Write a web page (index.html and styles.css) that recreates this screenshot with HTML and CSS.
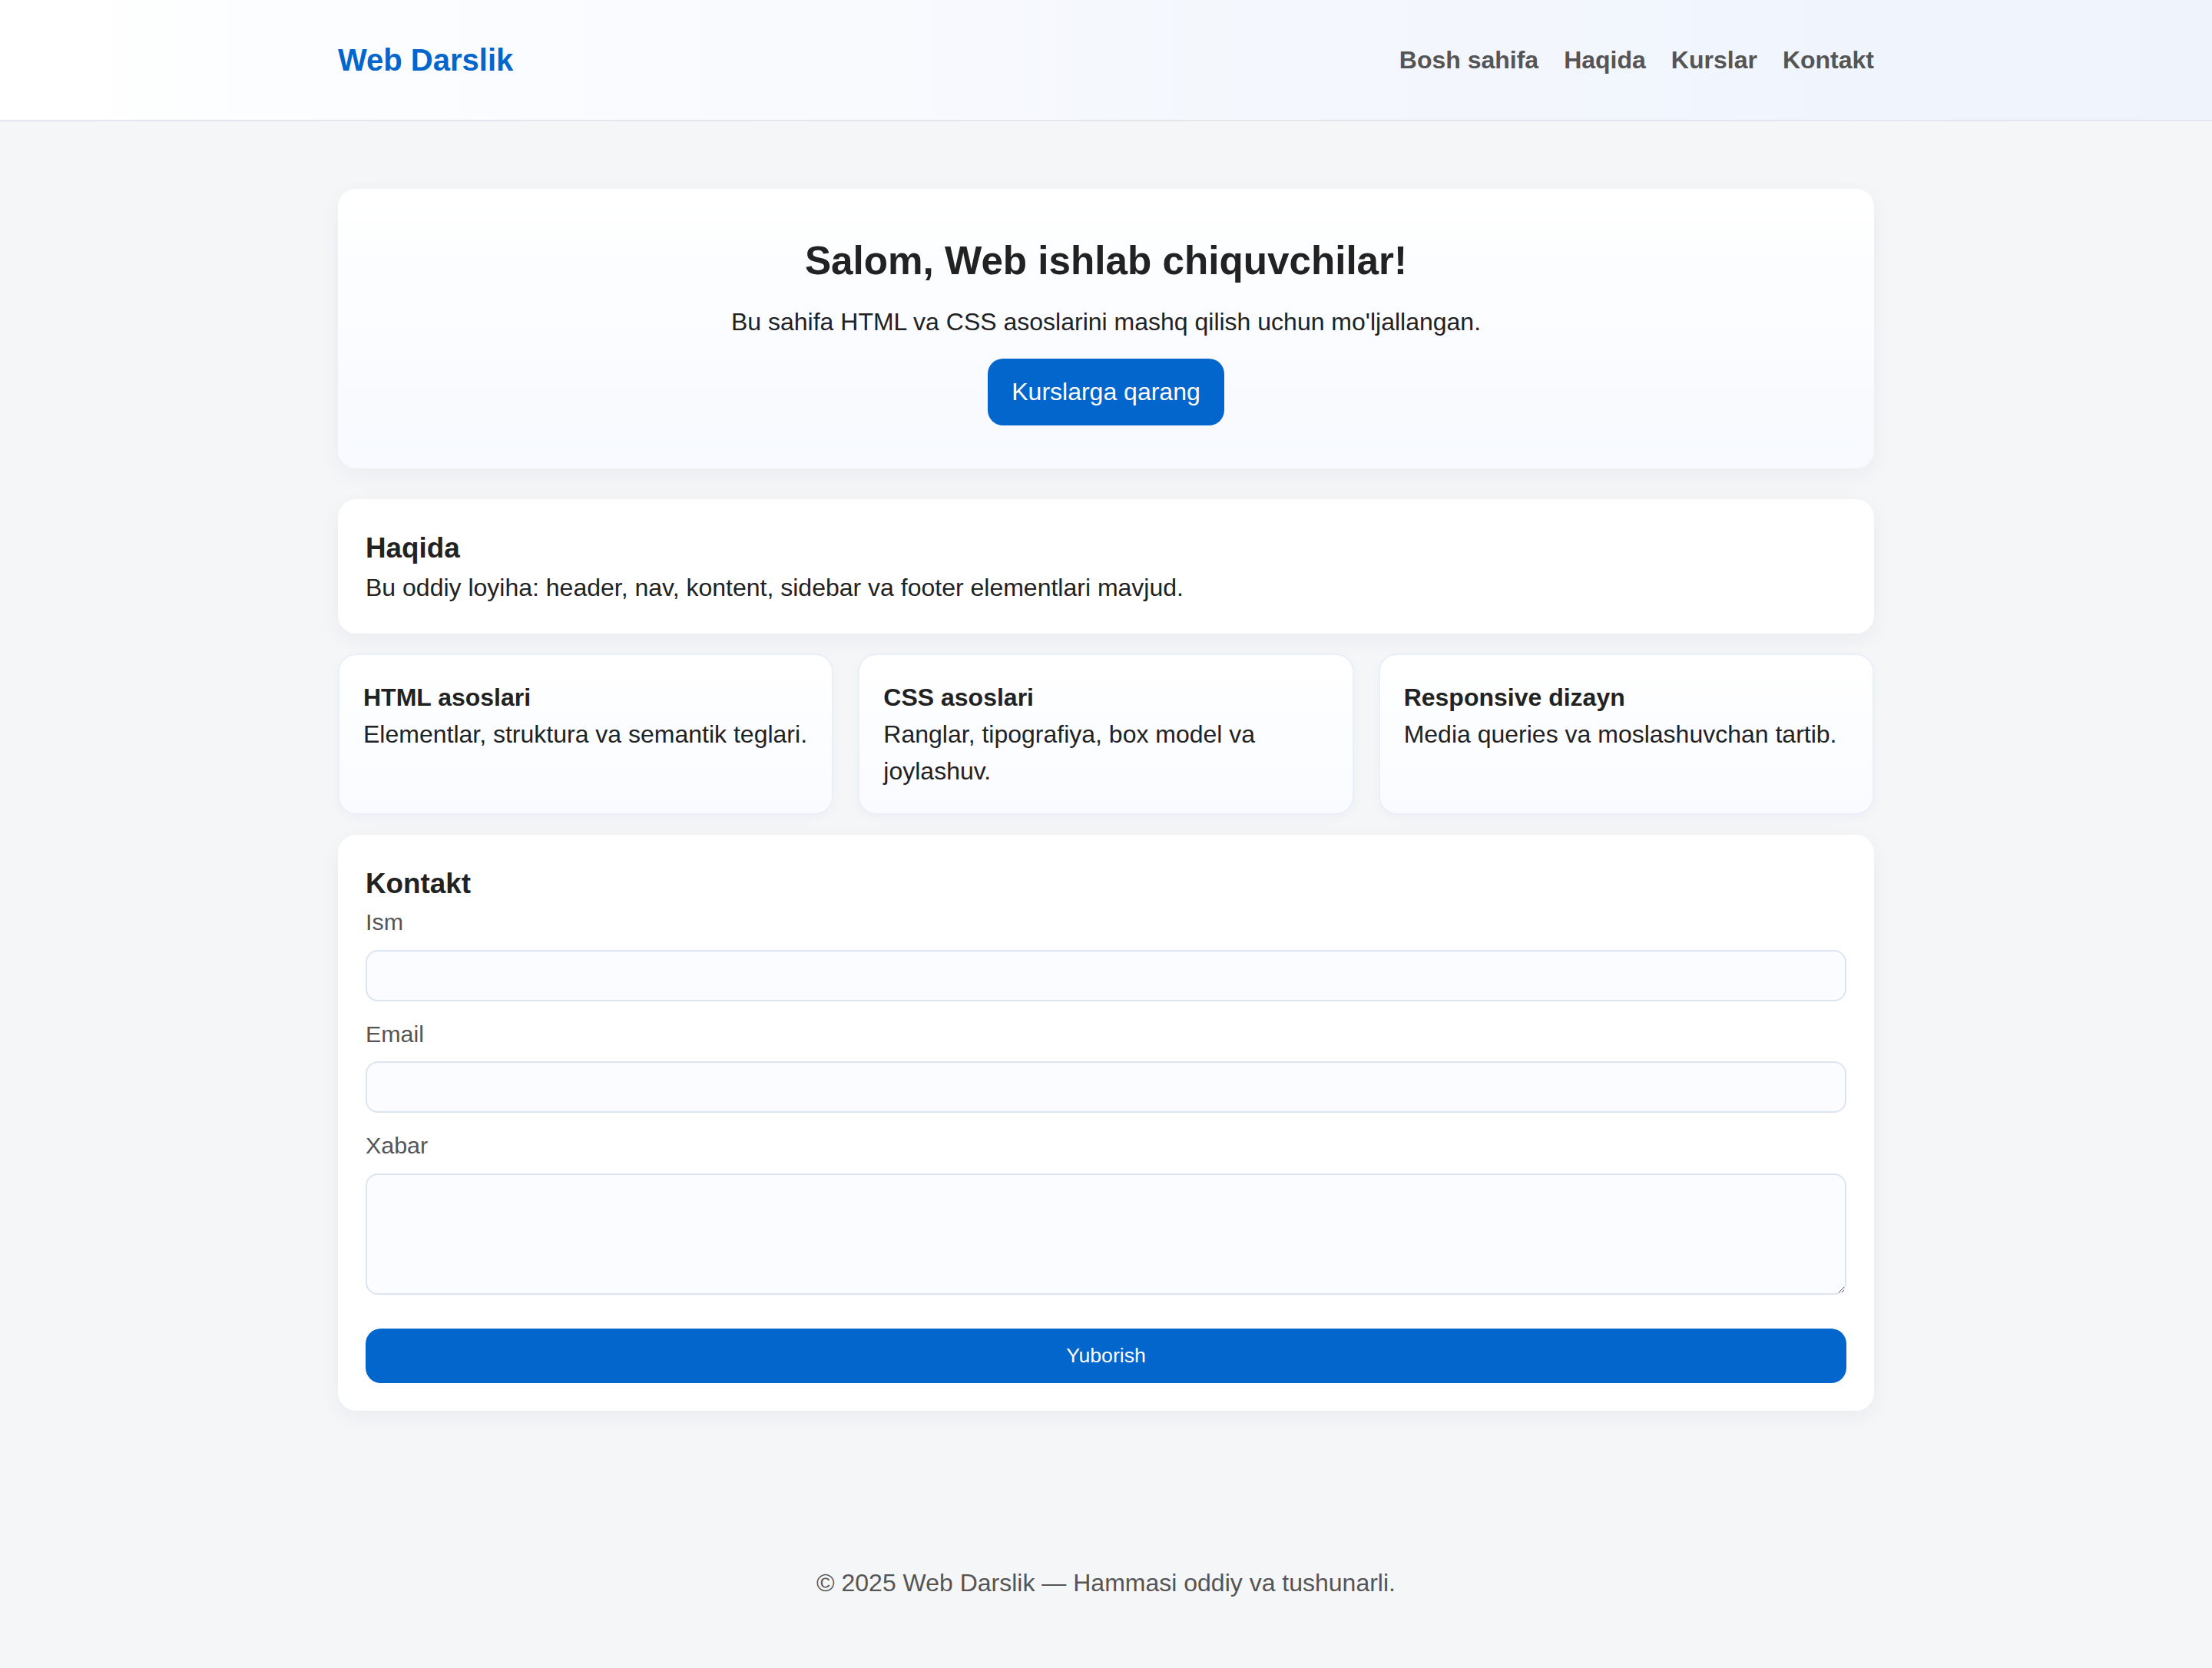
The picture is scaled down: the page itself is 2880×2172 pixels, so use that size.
FILE: index.html
```html
<!DOCTYPE html>
<html lang="uz">
<head>
<meta charset="utf-8">
<title>Web Darslik</title>
<link rel="stylesheet" href="styles.css">
</head>
<body>
<header class="site-header">
  <div class="header-inner">
    <a class="logo" href="#">Web Darslik</a>
    <nav class="nav">
      <a href="#">Bosh sahifa</a>
      <a href="#">Haqida</a>
      <a href="#">Kurslar</a>
      <a href="#">Kontakt</a>
    </nav>
  </div>
</header>
<main class="main">
  <section class="hero">
    <h1>Salom, Web ishlab chiquvchilar!</h1>
    <p>Bu sahifa HTML va CSS asoslarini mashq qilish uchun mo'ljallangan.</p>
    <div class="hero-action"><a class="btn" href="#">Kurslarga qarang</a></div>
  </section>

  <section class="panel">
    <h2>Haqida</h2>
    <p>Bu oddiy loyiha: header, nav, kontent, sidebar va footer elementlari mavjud.</p>
  </section>

  <div class="features">
    <article class="feature">
      <h3>HTML asoslari</h3>
      <p>Elementlar, struktura va semantik teglari.</p>
    </article>
    <article class="feature">
      <h3>CSS asoslari</h3>
      <p>Ranglar, tipografiya, box model va joylashuv.</p>
    </article>
    <article class="feature">
      <h3>Responsive dizayn</h3>
      <p>Media queries va moslashuvchan tartib.</p>
    </article>
  </div>

  <section class="panel panel-last">
    <h2>Kontakt</h2>
    <form class="form">
      <label for="ism">Ism</label>
      <input id="ism" type="text">
      <label for="email">Email</label>
      <input id="email" type="email">
      <label for="xabar">Xabar</label>
      <textarea id="xabar"></textarea>
      <button type="button" class="submit">Yuborish</button>
    </form>
  </section>
</main>
<footer class="footer">© 2025 Web Darslik — Hammasi oddiy va tushunarli.</footer>
</body>
</html>
```

FILE: styles.css
```css
* { box-sizing: border-box; }

body {
  margin: 0;
  background: #f5f6f8;
  font-family: "Liberation Sans", Arial, Helvetica, sans-serif;
  font-size: 32px;
  line-height: 1.5;
  color: #222;
}

.site-header {
  background: linear-gradient(90deg, #ffffff 0%, #f5f8fd 50%, #eef3fc 100%);
  border-bottom: 2px solid #e3e6ee;
}

.header-inner {
  width: 2000px;
  margin: 0 auto;
  height: 156px;
  display: flex;
  align-items: center;
  justify-content: space-between;
}

.logo {
  font-size: 40px;
  font-weight: bold;
  color: #0366cc;
  text-decoration: none;
}

.nav {
  display: flex;
  gap: 33px;
}

.nav a {
  font-size: 32px;
  font-weight: bold;
  color: #555;
  text-decoration: none;
}

.main {
  width: 2000px;
  margin: 0 auto;
  padding: 88px 0 112px;
}

.hero {
  padding: 56px;
  text-align: center;
  border-radius: 24px;
  background: linear-gradient(180deg, #ffffff 0%, #f6f9fe 100%);
  box-shadow: 0 8px 28px rgba(20, 30, 60, 0.05);
  margin-bottom: 40px;
}

.hero h1 {
  font-size: 51.2px;
  line-height: 1.5;
  margin: 0 0 16px;
}

.hero p {
  margin: 0 0 24px;
}

.hero-action {
  display: flex;
  justify-content: center;
}

.btn {
  display: block;
  padding: 19.5px 31px;
  background: #0366cc;
  color: #fff;
  line-height: 48px;
  border-radius: 20px;
  text-decoration: none;
}

.panel {
  background: #fff;
  border-radius: 24px;
  padding: 36px;
  box-shadow: 0 8px 28px rgba(20, 30, 60, 0.05);
  margin-bottom: 26px;
}

.panel-last { margin-bottom: 0; }

.panel h2 {
  font-size: 36.8px;
  line-height: 1.5;
  margin: 0;
}

.panel p { margin: 0; }

.features {
  display: grid;
  grid-template-columns: repeat(3, 1fr);
  gap: 32px;
  margin-bottom: 26px;
}

.feature {
  border: 2px solid #e9effb;
  border-radius: 24px;
  padding: 31px 31px;
  background: linear-gradient(180deg, #ffffff 0%, #f9fbff 100%);
  box-shadow: 0 4px 14px rgba(20, 30, 60, 0.03);
}

.feature h3 {
  font-size: 32px;
  line-height: 1.5;
  margin: 0;
}

.feature p { margin: 0; }

.form label {
  display: block;
  font-size: 30.4px;
  line-height: 1.5;
  color: #555;
  margin-bottom: 13px;
}

.form input,
.form textarea {
  display: block;
  width: 100%;
  height: 67px;
  padding: 13px 20px;
  border: 2px solid #dde5f1;
  border-radius: 16px;
  background: #fafcff;
  font-family: "Liberation Sans", Arial, sans-serif;
  font-size: 32px;
  color: #222;
  margin: 0 0 20px;
}

.form textarea {
  height: 158px;
  resize: vertical;
  margin-bottom: 44px;
}

.submit {
  display: block;
  width: 100%;
  padding: 20px;
  border: none;
  border-radius: 20px;
  background: #0366cc;
  color: #fff;
  font-family: "Liberation Sans", Arial, sans-serif;
  font-size: 26.67px;
  line-height: normal;
}

.footer {
  text-align: center;
  color: #555;
  padding: 88px 0;
}
```
